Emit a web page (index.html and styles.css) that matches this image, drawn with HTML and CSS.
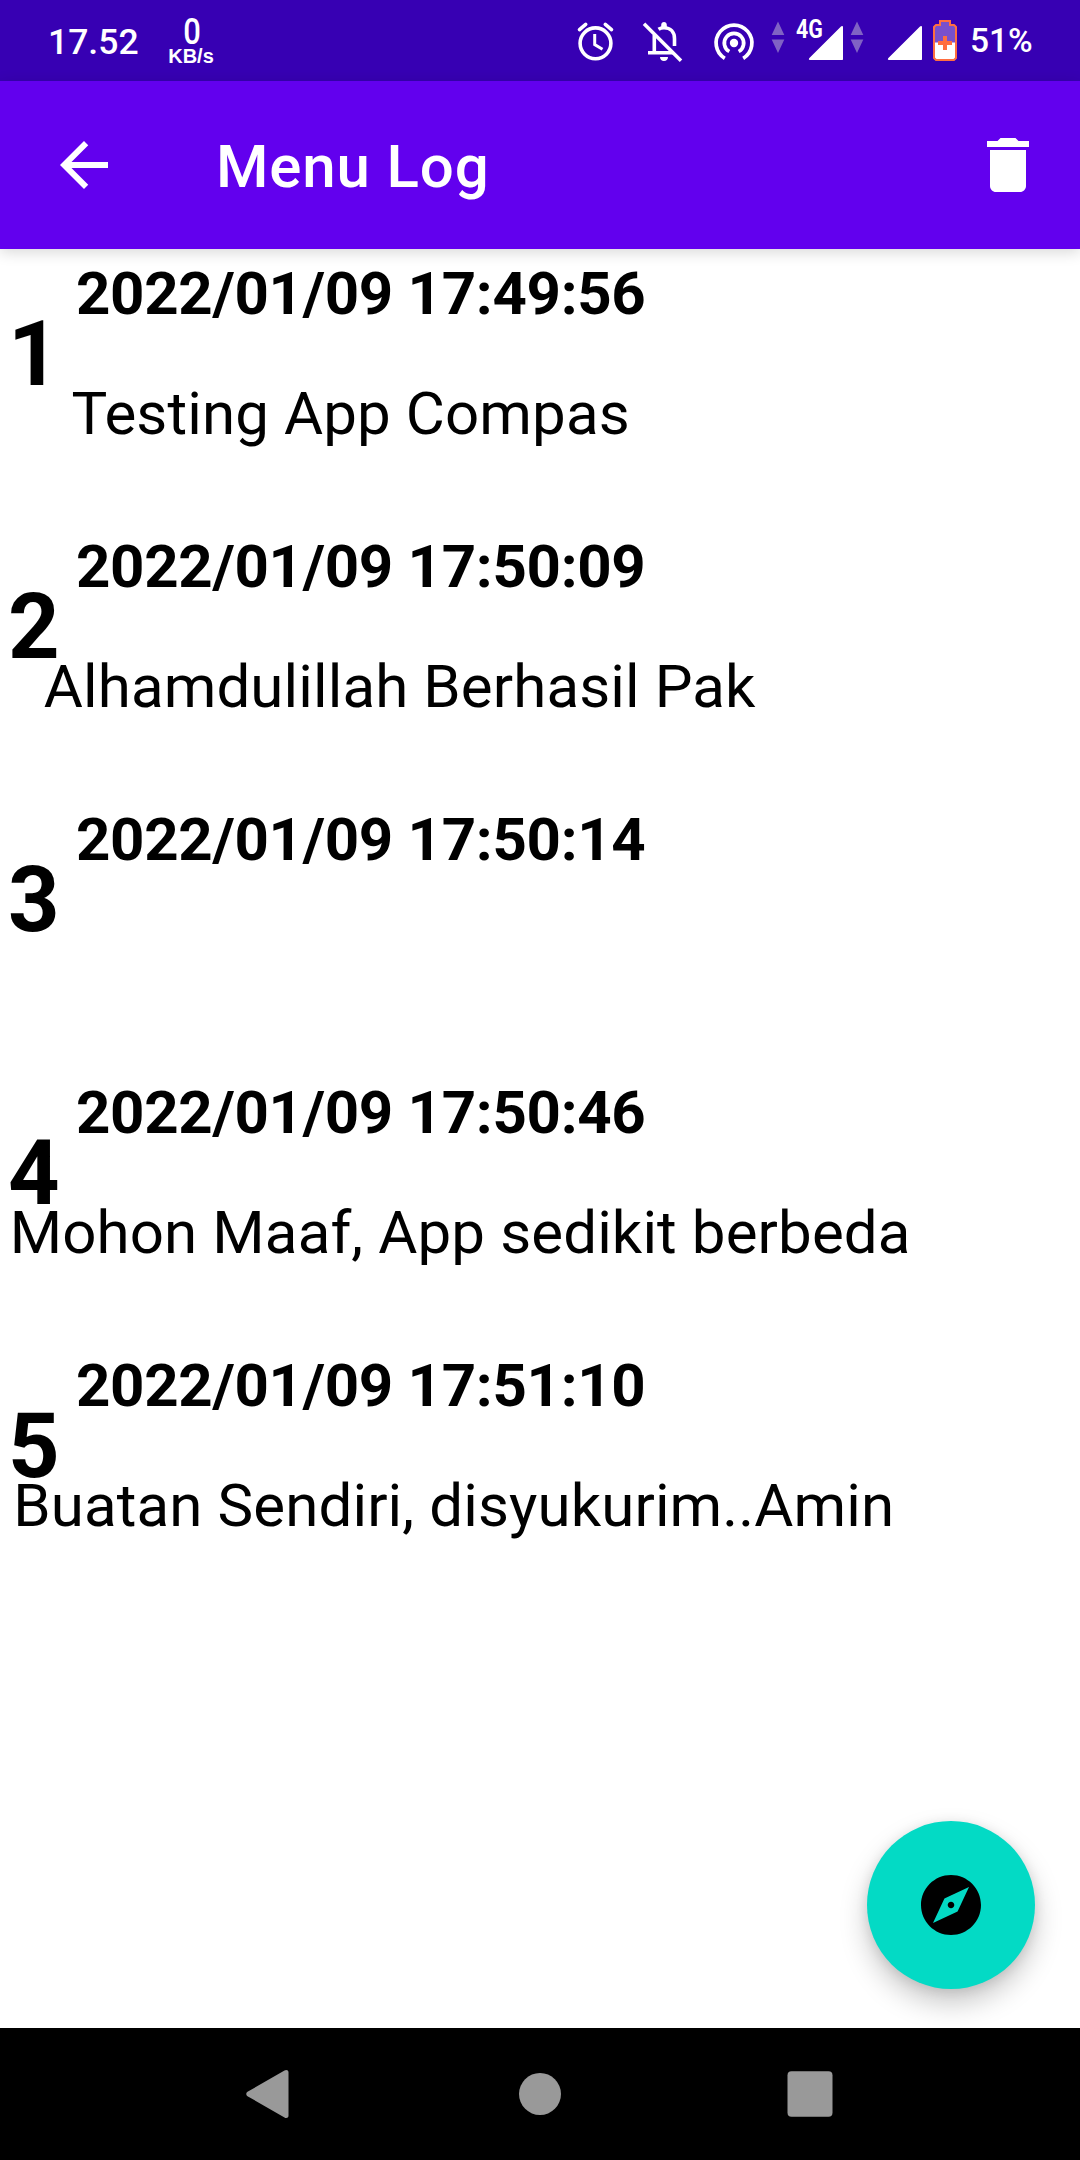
FILE: index.html
```html
<!DOCTYPE html>
<html lang="id">
<head>
<meta charset="utf-8">
<title>Menu Log</title>
<link rel="stylesheet" href="styles.css">
</head>
<body>
<div class="screen">
  <header class="status">
    <span class="clock">17.52</span>
    <span class="speed"><span class="speed-value">0</span><span class="speed-unit">KB/s</span></span>
    <span class="status-icons">
      <svg class="alarm" width="44" height="44" viewBox="574 18 44 44" fill="none" stroke="#fff" stroke-width="3.6">
        <circle cx="595.5" cy="42.3" r="15.4"/>
        <path d="M594.7 33v10.6l7.8 4.6" stroke-width="3"/>
        <path d="M579.5 28.6l6.2-5.2M605.300 23.400l6.200 5.200" stroke-linecap="round"/>
      </svg>
      <svg class="bell" width="44" height="44" viewBox="642 18 44 44" fill="none" stroke="#fff" stroke-width="3.6">
        <path d="M654.300 34v17.500M648 51.800h25M658.500 28.200c1.600-1 3.400-1.500 5.500-1.500 6.500 0 10.500 4.500 10.500 11v7.300"/>
        <path d="M644 22.800l37 37"/>
        <path d="M660 56h8c0 2.400-1.700 4-4 4s-4-1.600-4-4zM661.200 26v-2c0-1.700 1.200-2.900 2.800-2.900s2.800 1.200 2.800 2.900v2z" fill="#fff" stroke="none"/>
      </svg>
      <svg class="hotspot" width="44" height="44" viewBox="712 18 44 44" fill="none" stroke="#fff" stroke-width="3.7">
        <circle cx="734" cy="42" r="4.2" fill="#fff" stroke="none"/>
        <path d="M729.300 50.500a9.700 9.700 0 1 1 9.400 0M724.800 57.300a17.900 17.900 0 1 1 18.400 0"/>
      </svg>
      <svg class="traffic-a" width="14" height="34" viewBox="0 0 14 34" fill="#8062c4"><path d="M7 2.500L13.300 16H.7zM7 34L.7 20.500h12.600z"/></svg>
      <span class="mobile">
        <span class="network">4G</span>
        <svg width="36" height="36" viewBox="0 0 36 36" fill="#fff"><path d="M33 1.500c1-1 2-.5 2 .8V34c0 .8-.2 1-1 1H2c-1.400 0-1.500-1-.6-1.900z"/></svg>
      </span>
      <svg class="traffic-b" width="14" height="34" viewBox="0 0 14 34" fill="#8062c4"><path d="M7 2.500L13.300 16H.7zM7 34L.7 20.500h12.600z"/></svg>
      <svg class="signal" width="36" height="36" viewBox="0 0 36 36" fill="#fff"><path d="M33 1.500c1-1 2-.5 2 .8V34c0 .8-.2 1-1 1H2c-1.400 0-1.500-1-.6-1.900z"/></svg>
      <svg class="battery" width="24" height="41" viewBox="0 0 24 41">
        <path d="M7 1h10v4h5l1 1v33l-1 1H2l-1-1V6l1-1h5z" fill="#7850cc"/>
        <path d="M2 22.500h20V39H2z" fill="#fff"/>
        <path d="M7 1h10v4h4l2 2v31l-2 2H3l-2-2V7l2-2h4z" fill="none" stroke="#ff6e40" stroke-width="2"/>
        <path d="M12 16v14M5 23h14" stroke="#ff6e40" stroke-width="4"/>
      </svg>
    </span>
    <span class="percent">51%</span>
  </header>

  <nav class="toolbar">
    <svg width="72" height="72" viewBox="0 0 24 24" fill="#fff"><path d="M20 11H7.830l5.590-5.590L12 4l-8 8 8 8 1.410-1.410L7.830 13H20v-2z"/></svg>
    <h1 class="title">Menu Log</h1>
    <svg width="72" height="72" viewBox="0 0 24 24" fill="#fff"><path d="M6 19c0 1.100.9 2 2 2h8c1.100 0 2-.9 2-2V7H6v12zM19 4h-3.500l-1-1h-5l-1 1H5v2h14V4z"/></svg>
  </nav>

  <main class="log">
    <article class="entry">
      <span class="number">1</span>
      <time class="date">2022/01/09 17:49:56</time>
      <p class="message"><span>Testing App Compas</span></p>
    </article>
    <article class="entry">
      <span class="number">2</span>
      <time class="date">2022/01/09 17:50:09</time>
      <p class="message"><span>Alhamdulillah Berhasil Pak</span></p>
    </article>
    <article class="entry">
      <span class="number">3</span>
      <time class="date">2022/01/09 17:50:14</time>
      <p class="message"></p>
    </article>
    <article class="entry">
      <span class="number">4</span>
      <time class="date">2022/01/09 17:50:46</time>
      <p class="message"><span>Mohon Maaf, App sedikit berbeda</span></p>
    </article>
    <article class="entry">
      <span class="number">5</span>
      <time class="date">2022/01/09 17:51:10</time>
      <p class="message"><span>Buatan Sendiri, disyukurim..Amin</span></p>
    </article>
    <button class="fab" aria-label="Kompas">
      <svg width="72" height="72" viewBox="0 0 24 24"><path d="M12 10.900c-.61 0-1.100.49-1.100 1.100s.49 1.100 1.100 1.100c.61 0 1.100-.49 1.100-1.100s-.49-1.100-1.100-1.100zM12 2C6.480 2 2 6.480 2 12s4.480 10 10 10 10-4.480 10-10S17.520 2 12 2zm2.190 12.190L6 18l3.810-8.190L18 6l-3.810 8.190z"/></svg>
    </button>
  </main>

  <footer class="navbar">
    <svg width="48" height="50" viewBox="0 0 48 50" fill="#999"><path d="M38.500 1.600c1.700-1.200 4-.4 4 1.700v43.400c0 2.100-2.300 2.900-4 1.700L1.500 27.200c-1.700-1.300-1.700-3.100 0-4.400z"/></svg>
    <svg width="48" height="50" viewBox="0 0 48 50" fill="#999"><circle cx="24" cy="25" r="21"/></svg>
    <svg width="48" height="50" viewBox="0 0 48 50" fill="#999"><rect x="1.500" y="2.200" width="45" height="45.500" rx="4"/></svg>
  </footer>
</div>
</body>
</html>
```

FILE: styles.css
```css
* { box-sizing: border-box; }

body {
  margin: 0;
  font-family: Roboto, "Liberation Sans", sans-serif;
  background: #fff;
}

.screen {
  width: 1080px;
  height: 2160px;
  display: flex;
  flex-direction: column;
  overflow: hidden;
}

.status {
  height: 81px;
  flex: none;
  display: flex;
  align-items: center;
  padding: 0 48px;
  background: #3700b3;
  color: #fff;
  font-weight: 500;
  white-space: nowrap;
}

.clock {
  width: 92px;
  font-size: 35.5px;
  line-height: 42px;
  padding-top: 3px;
}

.speed {
  width: 46px;
  margin-left: 28px;
  display: flex;
  flex-direction: column;
  align-items: center;
  height: 52px;
}

.speed-value {
  font-size: 36px;
  line-height: 34px;
  padding-left: 2px;
  transform: scaleX(.86);
}

.speed-unit {
  font: bold 20px/15px "Liberation Sans", Arial, sans-serif;
}

.status-icons {
  display: flex;
  margin-left: auto;
}

.status-icons svg { display: block; flex: none; }

.bell { margin-left: 24px; }
.hotspot { margin-left: 26px; }
.traffic-a { margin: 0 0 0 15px; }

.mobile {
  position: relative;
  margin: 6px 0 0 23px;
}

.network {
  position: absolute;
  left: -12px;
  top: -8px;
  font-size: 26px;
  line-height: 25px;
  font-weight: 700;
  transform: scaleX(.82);
  transform-origin: left;
}

.traffic-b { margin-left: 6px; }
.signal { margin: 6px 0 0 23px; }
.battery { margin: 1px 0 0 10px; }

.percent {
  width: 62px;
  margin-left: 13px;
  font-size: 33.500px;
  line-height: 40px;
  padding-top: 1px;
}

.toolbar {
  position: relative;
  z-index: 1;
  height: 168px;
  flex: none;
  display: flex;
  align-items: center;
  padding: 0 36px 0 48px;
  background: #6200ee;
  color: #fff;
  box-shadow: 0 3px 14px rgba(0, 0, 0, .16);
}

.title {
  flex: 1;
  margin: 0 0 0 96px;
  font-size: 60px;
  line-height: 70px;
  font-weight: 500;
  letter-spacing: .85px;
  padding-top: 4px;
}

.log {
  position: relative;
  flex: 1;
  color: #000;
}

.entry {
  height: 273px;
  display: grid;
  grid-template: 118px 155px / 76px 1fr;
}

.number {
  grid-area: 1 / 1;
  padding: 53px 0 0 8px;
  font-size: 90px;
  line-height: 106px;
  font-weight: 700;
}

.date {
  grid-area: 1 / 2;
  padding-top: 10px;
  font-size: 60px;
  line-height: 70px;
  font-weight: 700;
  letter-spacing: -.3px;
}

.message {
  grid-area: 2 / 1 / 3 / 3;
  display: flex;
  width: 955px;
  margin: 0;
  padding-top: 12px;
  font-size: 60px;
  line-height: 70px;
  letter-spacing: .12px;
  white-space: nowrap;
}

.message::before { content: ""; flex: 18 0 0; }
.message::after { content: ""; flex: 82 0 0; }

.fab {
  position: absolute;
  right: 45px;
  bottom: 39px;
  width: 168px;
  height: 168px;
  display: grid;
  place-items: center;
  padding: 0;
  border: 0;
  border-radius: 50%;
  background: #03dac5;
  box-shadow: 0 14px 28px rgba(0, 0, 0, .22), 0 2px 12px rgba(0, 0, 0, .1);
}

.navbar {
  height: 132px;
  flex: none;
  display: flex;
  justify-content: center;
  align-items: center;
  gap: 222px;
  background: #000;
}
```
